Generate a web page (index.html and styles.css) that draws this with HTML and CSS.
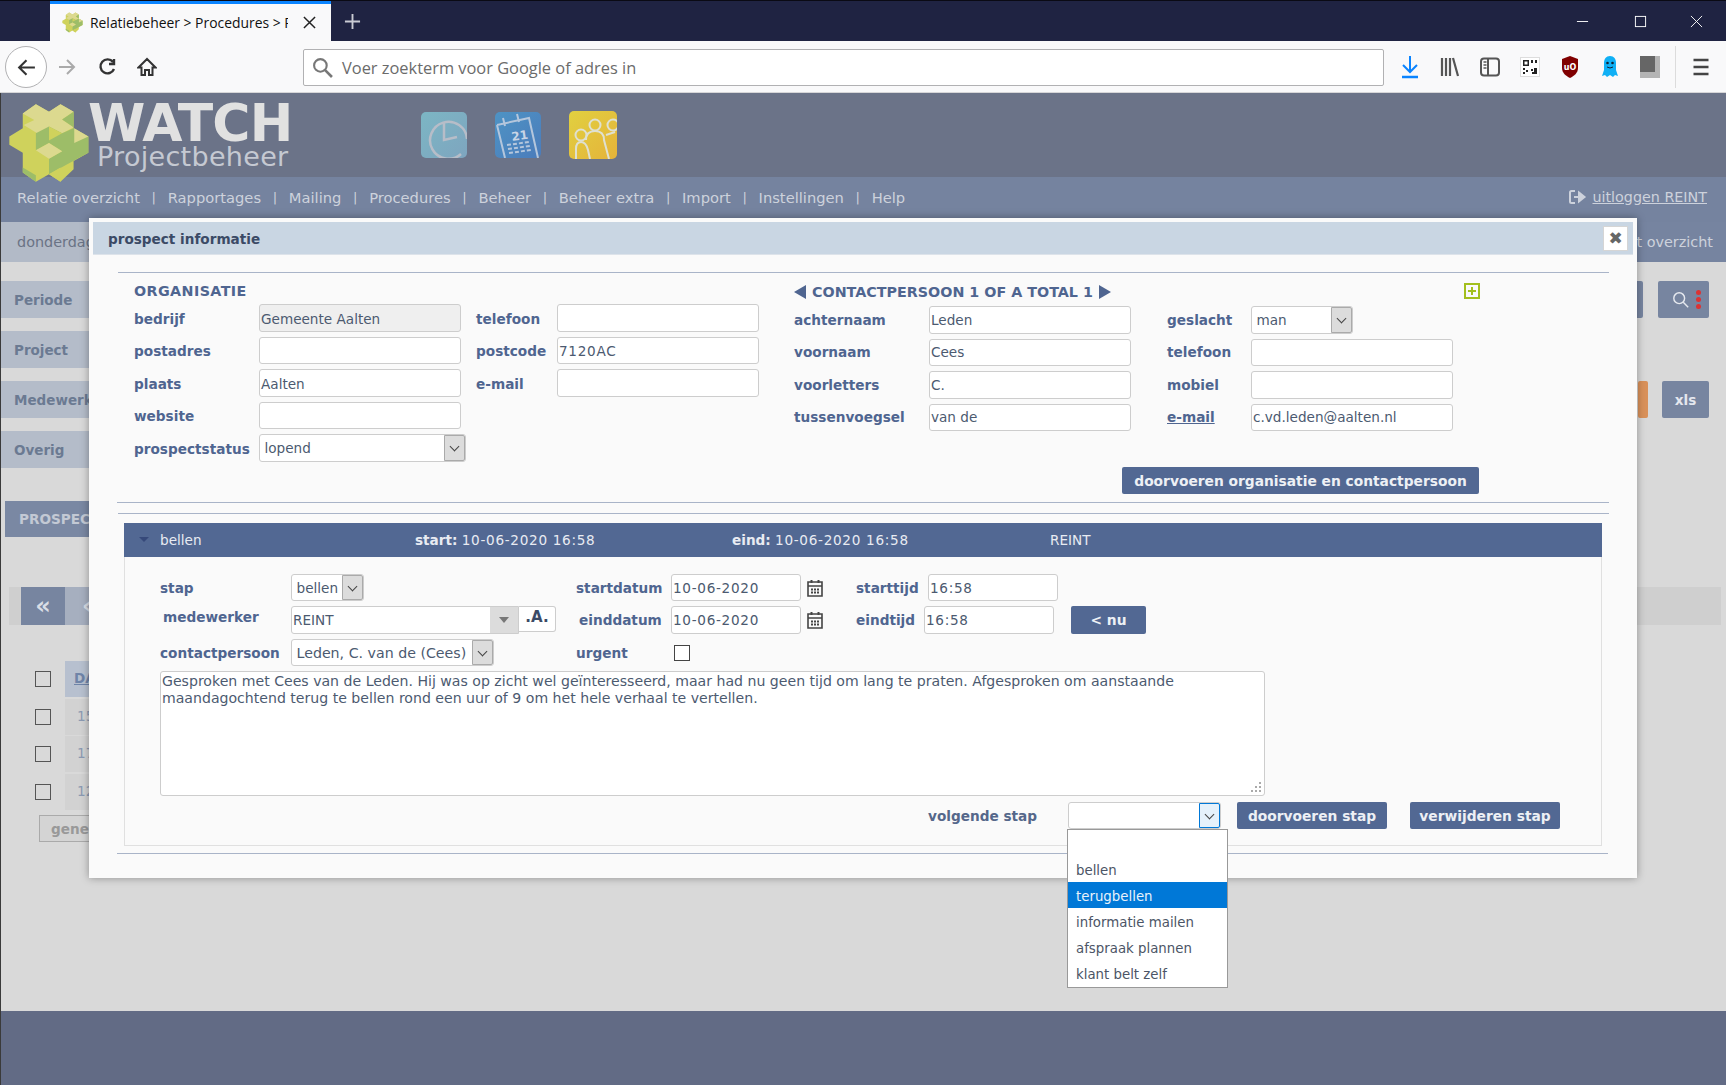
FILE: index.html
```html
<!DOCTYPE html>
<html lang="nl">
<head>
<meta charset="utf-8">
<title>Relatiebeheer &gt; Procedures</title>
<link rel="stylesheet" href="styles.css">
</head>
<body>
<div class="browser">
  <div class="titlebar">
    <div class="tab">
      <svg class="favicon" viewBox="20 35 250 250"><use href="#logo"/></svg>
      <span class="tab-title">Relatiebeheer &gt; Procedures &gt; P</span>
      <svg class="tab-close" viewBox="0 0 14 14"><path d="M1 1l12 12M13 1L1 13" stroke="#222" stroke-width="1.6" fill="none"/></svg>
    </div>
    <svg class="newtab" viewBox="0 0 18 18"><path d="M9 1v16M1 9h16" stroke="#c9cbd3" stroke-width="2" fill="none"/></svg>
    <div class="winctl">
      <svg class="wmin" viewBox="0 0 14 14"><path d="M1 7h12" stroke="#fff" fill="none"/></svg>
      <svg viewBox="0 0 14 14"><rect x="1.5" y="1.5" width="11" height="11" stroke="#fff" fill="none"/></svg>
      <svg viewBox="0 0 14 14"><path d="M1 1l12 12M13 1L1 13" stroke="#fff" fill="none"/></svg>
    </div>
  </div>
  <div class="toolbar">
    <div class="backbtn"><svg viewBox="0 0 20 20"><path d="M18 10H3M10 3l-7 7 7 7" stroke="#333" stroke-width="2" fill="none"/></svg></div>
    <svg class="tbicon fwd" viewBox="0 0 20 20"><path d="M2 10h15M10 3l7 7-7 7" stroke="#aaa" stroke-width="2" fill="none"/></svg>
    <svg class="tbicon reload" viewBox="0 0 20 20"><path d="M16 12a7 7 0 1 1-1-7M16 2v5h-5" stroke="#333" stroke-width="2.400" fill="none"/></svg>
    <svg class="tbicon home" viewBox="0 0 20 20"><path d="M10 2L1.500 10.500H4.500V18H8V13h4v5h3.500V10.500H18.500z" stroke="#333" stroke-width="2" fill="none"/></svg>
    <div class="urlbar">
      <svg viewBox="0 0 20 20"><circle cx="8" cy="8" r="6" stroke="#777" stroke-width="2" fill="none"/><path d="M12.500 12.500L19 19" stroke="#777" stroke-width="2.500"/></svg>
      <span>Voer zoekterm voor Google of adres in</span>
    </div>
    <div class="tbright">
      <svg viewBox="0 0 20 24"><path d="M10 1v15M3 10l7 7 7-7" stroke="#0a84ff" stroke-width="2" fill="none"/><path d="M2 22h16" stroke="#0a84ff" stroke-width="2.500"/></svg>
      <svg viewBox="0 0 20 24"><path d="M2 3v18M6 3v18M10 3v18M13 3l5 18" stroke="#555" stroke-width="2.200" fill="none"/></svg>
      <svg viewBox="0 0 20 24"><rect x="1" y="3.500" width="18" height="17" rx="3" stroke="#555" stroke-width="2" fill="none"/><path d="M8 4v16" stroke="#555" stroke-width="2"/><path d="M3.500 7h3M3.500 10h3M3.500 13h3" stroke="#555" stroke-width="1.500"/></svg>
      <svg viewBox="0 0 20 24"><rect x="0.500" y="2.500" width="19" height="19" fill="#fff" stroke="#ddd"/><path fill-rule="evenodd" d="M3 5h6v6H3zM4.500 6.500v3h3v-3zM11 5h2v3h-2zM15 5h2v3h-2zM3 13h2v2H3zM6 15h2v2H6zM3 17h2v2H3zM11 14h2v2h-2zM14 13h3v6h-5v-2h2z" fill="#222"/></svg>
      <svg viewBox="0 0 20 24"><path d="M10 1l8 3v9c0 5-4 8-8 10-4-2-8-5-8-10V4z" fill="#800000"/><text x="10" y="15" class="ublock">uO</text></svg>
      <svg viewBox="0 0 20 24"><path d="M10 1c-4 0-6 3-6 7v7l-2 6 3-1 2 2 3-2 3 2 2-2 3 1-2-6V8c0-4-2-7-6-7z" fill="#10b0f5"/><circle cx="7.500" cy="8" r="1.300" fill="#123"/><circle cx="12.500" cy="8" r="1.300" fill="#123"/><path d="M7 12q3 2 6 0" stroke="#123" fill="none"/></svg>
      <svg viewBox="0 0 20 24"><rect y="1" width="20" height="22" fill="#b4b4b4"/><rect y="1" width="15" height="16" fill="#666"/></svg>
      <i class="tbsep"></i>
      <svg viewBox="0 0 20 24"><path d="M2.500 5h15M2.500 12h15M2.500 19h15" stroke="#444" stroke-width="2.400"/></svg>
    </div>
  </div>

  <div class="page">
    <header class="header">
      <svg class="logo" viewBox="20 38 250 244">
        <g id="logo">
          <polygon fill="#cfd25c" points="105,42 145,65 180,42 220,65 220,115 265,140 265,190 220,215 220,240 180,278 145,255 105,278 65,250 65,190 24,165 24,140 65,115 65,70"/>
          <polygon fill="#dcd98f" points="65,70 105,42 145,65 180,42 220,65 185,88 220,112 145,152 68,105 100,90"/>
          <polygon fill="#9dbd68" points="185,88 220,65 220,112"/>
          <polygon fill="#9dbd68" points="105,130 145,110 185,130 220,115 265,140 265,190 145,255 145,208 185,185 145,160 105,182"/>
          <polygon fill="#dcd98f" points="222,115 265,140 222,160"/>
          <polygon fill="#dcd98f" points="105,182 145,160 185,185 145,208"/>
          <polygon fill="#cfd25c" points="145,110 185,130 145,152"/>
          <polygon fill="#9dbd68" points="65,235 105,258 105,278 65,250"/>
          <polygon fill="#cfd25c" points="145,255 180,235 180,278"/>
        </g>
      </svg>
      <div class="brand">
        <div class="brand-name">WATCH</div>
        <div class="brand-sub">Projectbeheer</div>
      </div>
      <div class="apps">
        <svg class="app" viewBox="0 0 46 46"><defs><linearGradient id="gc" x1="0" y1="0" x2="1" y2="1"><stop offset="0" stop-color="#7cb6c4"/><stop offset="1" stop-color="#7ea5bf"/></linearGradient></defs><rect width="46" height="46" rx="5" fill="url(#gc)"/><path d="M46 27a18.500 18.500 0 1 0-6 15M23 11v17l13-3" stroke="#b7bdc8" stroke-width="2.500" fill="none"/></svg>
        <svg class="app" viewBox="0 0 46 46"><defs><linearGradient id="gk" x1="0" y1="0" x2="1" y2="1"><stop offset="0" stop-color="#4e93c4"/><stop offset="1" stop-color="#4b7cbb"/></linearGradient></defs><rect width="46" height="46" rx="5" fill="url(#gk)"/><path d="M2 13l32-7 9 40M2 13l8 33" stroke="#b4c6dc" stroke-width="2" fill="none"/><path d="M8 6l2 8M22 2l2 8" stroke="#b4c6dc" stroke-width="2"/><text x="17" y="29" class="cal21" transform="rotate(-8 17 29)">21</text><path d="M12 33l22-3M13 37l22-3M14 41l22-3" stroke="#b4c6dc" stroke-width="2" stroke-dasharray="4 2"/></svg>
        <svg class="app people" viewBox="0 0 48 48"><defs><linearGradient id="gp" x1="0" y1="0" x2="1" y2="1"><stop offset="0" stop-color="#e1d040"/><stop offset="1" stop-color="#e5b33a"/></linearGradient></defs><rect width="48" height="48" rx="5" fill="url(#gp)"/><circle cx="12" cy="24" r="5.500" stroke="#dfe0d0" stroke-width="2" fill="none"/><circle cx="26" cy="14" r="5.500" stroke="#dfe0d0" stroke-width="2" fill="none"/><circle cx="44" cy="14" r="5.500" stroke="#dfe0d0" stroke-width="2" fill="none"/><path d="M7 48V38q0-7 5-7t7 8l2 9M17 29q0-9 9-9t9 9l5 19M37 24l9-3" stroke="#dfe0d0" stroke-width="2" fill="none"/></svg>
      </div>
    </header>
    <nav class="nav">
      <a>Relatie overzicht</a><i>|</i><a>Rapportages</a><i>|</i><a>Mailing</a><i>|</i><a>Procedures</a><i>|</i><a>Beheer</a><i>|</i><a>Beheer extra</a><i>|</i><a>Import</a><i>|</i><a>Instellingen</a><i>|</i><a>Help</a>
      <a class="logout"><svg viewBox="0 0 18 14"><path d="M6 1H2.500Q1 1 1 2.500v9Q1 13 2.500 13H6" stroke="#cdd2dc" stroke-width="2" fill="none"/><path d="M5 7h8M10 2.500L15.500 7 10 11.500z" stroke="#cdd2dc" stroke-width="2" fill="#cdd2dc"/></svg><u>uitloggen REINT</u></a>
    </nav>
    <div class="subbar"><span>donderdag</span><span>project overzicht</span></div>

    <main class="content">
      <div class="frow"><div class="flabel">Periode</div><div class="fright"><div class="fbtn wide"></div><div class="fbtn search"><svg viewBox="0 0 20 20"><circle cx="8" cy="8" r="6" stroke="#e6e9ef" stroke-width="1.600" fill="none"/><path d="M12.500 12.500L18 18" stroke="#e6e9ef" stroke-width="1.600"/></svg><b class="dots"></b></div></div></div>
      <div class="frow"><div class="flabel">Project</div></div>
      <div class="frow"><div class="flabel">Medewerker</div><div class="fright tight"><div class="fbtn orange"></div><div class="fbtn xls">xls</div></div></div>
      <div class="frow"><div class="flabel">Overig</div></div>
      <div class="ptab">PROSPECT</div>
      <div class="pager"><div class="pbtn">«</div><div class="pbtn light">‹</div></div>
      <div class="tbl">
        <div class="cb"></div><div class="th">DATUM</div>
        <div class="cb"></div><div class="td">15-06</div>
        <div class="cb"></div><div class="td">17-06</div>
        <div class="cb"></div><div class="td">12-06</div>
      </div>
      <div class="gen">genereren</div>
    </main>
    <div class="pagefoot"></div>

    <section class="modal">
      <div class="mtitle">
        <span>prospect informatie</span>
        <div class="mclose">✖</div>
      </div>
      <div class="rule first"></div>
      <div class="info">
        <div class="org">
          <h3 class="head wide">ORGANISATIE</h3>
          <div class="orggrid">
            <label>bedrijf</label><div class="field ro">Gemeente Aalten</div><label>telefoon</label><div class="field"></div>
            <label>postadres</label><div class="field"></div><label>postcode</label><div class="field num">7120AC</div>
            <label>plaats</label><div class="field">Aalten</div><label>e-mail</label><div class="field"></div>
            <label>website</label><div class="field"></div><span></span><span></span>
            <label>prospectstatus</label><div class="select over4"><span>lopend</span><b class="sbtn"></b></div>
          </div>
        </div>
        <div class="contact">
          <div class="chead">
            <h3 class="head"><i class="tri l"></i>CONTACTPERSOON 1 OF A TOTAL 1<i class="tri r"></i></h3>
            <svg class="plus" viewBox="0 0 16 16"><rect x="1" y="1" width="14" height="14" stroke="#a3bf1e" stroke-width="2" fill="none"/><path d="M8 4v8M4 8h8" stroke="#a3bf1e" stroke-width="2"/></svg>
          </div>
          <div class="congrid">
            <label>achternaam</label><div class="field">Leden</div><label>geslacht</label><div class="select short"><span>man</span><b class="sbtn"></b></div>
            <label>voornaam</label><div class="field">Cees</div><label>telefoon</label><div class="field"></div>
            <label>voorletters</label><div class="field">C.</div><label>mobiel</label><div class="field"></div>
            <label>tussenvoegsel</label><div class="field">van de</div><label><u>e-mail</u></label><div class="field">c.vd.leden@aalten.nl</div>
          </div>
          <div class="btn big">doorvoeren organisatie en contactpersoon</div>
        </div>
      </div>
      <div class="rule second"></div>
      <div class="rule third"></div>

      <div class="step">
        <div class="stepbar">
          <div class="sb-name"><i class="caret"></i>bellen</div>
          <div><b>start:</b> <span class="num">10-06-2020 16:58</span></div>
          <div><b>eind:</b> <span class="num">10-06-2020 16:58</span></div>
          <div>REINT</div>
        </div>
        <div class="stepbody">
          <div class="stepgrid">
            <label>stap</label><div class="ctl"><div class="select w73"><span>bellen</span><b class="sbtn"></b></div></div>
            <label>startdatum</label><div class="field num">10-06-2020</div>
            <svg class="cal" viewBox="0 0 16 18"><path d="M1 3h14v14H1zM1 7h14" stroke="#444" stroke-width="1.600" fill="none"/><path d="M4.500 1v3M11.500 1v3" stroke="#444" stroke-width="2"/><path d="M4 9.500h2v2H4zM7 9.500h2v2H7zM10 9.500h2v2h-2zM4 12.500h2v2H4zM7 12.500h2v2H7zM10 12.500h2v2h-2z" fill="#444"/></svg>
            <label>starttijd</label><div class="field num">16:58</div><span></span><span></span>

            <label class="shifted">medewerker</label>
            <div class="ctl combo"><div class="combo-in"><span>REINT</span><b class="cbtn"></b></div><div class="abtn">.A.</div></div>
            <label class="nudge">einddatum</label><div class="field num">10-06-2020</div>
            <svg class="cal" viewBox="0 0 16 18"><path d="M1 3h14v14H1zM1 7h14" stroke="#444" stroke-width="1.600" fill="none"/><path d="M4.500 1v3M11.500 1v3" stroke="#444" stroke-width="2"/><path d="M4 9.500h2v2H4zM7 9.500h2v2H7zM10 9.500h2v2h-2zM4 12.500h2v2H4zM7 12.500h2v2H7zM10 12.500h2v2h-2z" fill="#444"/></svg>
            <label>eindtijd</label><div class="field num shiftl">16:58</div><span></span><div class="btn nu">&lt; nu</div>

            <label>contactpersoon</label><div class="ctl"><div class="select w203"><span>Leden, C. van de (Cees)</span><b class="sbtn"></b></div></div>
            <label>urgent</label><div class="chkwrap"><div class="chk"></div></div>
          </div>
          <div class="note">Gesproken met Cees van de Leden. Hij was op zicht wel geïnteresseerd, maar had nu geen tijd om lang te praten. Afgesproken om aanstaande maandagochtend terug te bellen rond een uur of 9 om het hele verhaal te vertellen.
            <svg class="grip" viewBox="0 0 10 10"><path d="M8 0h2v2H8zM4 4h2v2H4zM8 4h2v2H8zM0 8h2v2H0zM4 8h2v2H4zM8 8h2v2H8z" fill="#aaa"/></svg>
          </div>
          <div class="nextrow">
            <label>volgende stap</label>
            <div class="select next">
              <span></span><b class="sbtn focus"></b>
              <ul class="menu">
                <li></li><li>bellen</li><li class="on">terugbellen</li><li>informatie mailen</li><li>afspraak plannen</li><li>klant belt zelf</li>
              </ul>
            </div>
            <div class="btn act">doorvoeren stap</div>
            <div class="btn act">verwijderen stap</div>
          </div>
        </div>
      </div>
      <div class="rule fourth"></div>
    </section>
  </div>
</div>
</body>
</html>
```
FILE: styles.css
```css
* { box-sizing: border-box; }
html, body { margin: 0; height: 100%; overflow: hidden; }
body { font-family: "DejaVu Sans", sans-serif; font-size: 13.6px; color: #4c5a70; }
.browser { width: 1726px; height: 1085px; display: flex; flex-direction: column; }

/* browser chrome */
.titlebar { height: 41px; flex: none; background: #1f2342; border-top: 1px solid #0a0a14; display: flex; align-items: stretch; padding-left: 50px; position: relative; }
.tab { width: 281px; background: #f9f9fa; border-top: 3px solid #0a84ff; display: flex; align-items: center; padding: 0 0 1px 12px; position: relative; font-family: "Open Sans", sans-serif; font-size: 13.9px; color: #111; overflow: hidden; }
.favicon { width: 21px; height: 21px; flex: none; margin-right: 7px; }
.tab-title { white-space: nowrap; width: 198px; overflow: hidden; }
.tab-close { width: 13px; height: 13px; margin-left: 15px; flex: none; }
.newtab { width: 17px; height: 17px; align-self: center; margin-left: 13px; }
.winctl { margin-left: auto; display: flex; align-items: center; gap: 43px; padding-right: 23px; }
.winctl svg { width: 13px; height: 13px; }
.winctl .wmin { margin-right: 2px; }
.toolbar { height: 52px; flex: none; background: #f9f9fa; border-bottom: 1px solid #d6d6d8; display: flex; align-items: center; padding: 1px 0 0 5px; }
.backbtn { width: 42px; height: 42px; border-radius: 50%; border: 1px solid #b1b1b3; background: #fff; display: flex; align-items: center; justify-content: center; }
.backbtn svg { width: 21px; height: 21px; }
.tbicon { width: 20px; height: 20px; flex: none; }
.fwd { margin-left: 10px; }
.reload { margin-left: 21px; }
.home { margin-left: 19px; }
.urlbar { margin-left: 146px; width: 1081px; height: 37px; background: #fff; border: 1px solid #b1b1b3; border-radius: 2px; display: flex; align-items: center; padding-left: 8px; font-family: "Open Sans", sans-serif; font-size: 16.4px; color: #6b6b6b; }
.urlbar svg { width: 21px; height: 21px; margin-right: 9px; flex: none; }
.urlbar span { padding-top: 1px; }
.tbright { display: flex; align-items: center; margin-left: 16px; gap: 20px; }
.tbright svg { width: 20px; height: 24px; flex: none; }
.tbsep { width: 1px; height: 42px; background: #dcdcdc; margin: 0 -5px; }
.ublock { font: bold 8px "DejaVu Sans", sans-serif; fill: #fff; text-anchor: middle; }

/* page behind the dialog */
.page { position: relative; flex: 1; display: flex; flex-direction: column; background: #d9d9d9; border-left: 1px solid #3a3a3a; }
.header { height: 84px; flex: none; background: #6b7388; display: flex; align-items: flex-start; padding: 10px 0 0 7px; position: relative; z-index: 1; }
.logo { width: 82px; height: 80px; flex: none; overflow: visible; }
.brand { margin: 0 0 0 -2px; width: 304px; flex: none; }
.brand-name { font-weight: bold; font-size: 52px; line-height: 40px; color: #e1e1e1; letter-spacing: -0.8px; }
.brand-sub { font-size: 27px; line-height: 28px; color: #c5c9d2; margin-left: 9px; letter-spacing: 0.3px; }
.apps { display: flex; align-items: flex-start; gap: 28px; margin-left: 29px; padding-top: 9px; }
.app { width: 46px; height: 46px; flex: none; }
.people { width: 48px; height: 48px; margin-top: -1px; }
.cal21 { font: bold 12px "DejaVu Sans", sans-serif; fill: #c8d5e6; }
.nav { height: 45px; flex: none; background: #75839f; display: flex; align-items: center; padding: 0 19px 5px 16px; color: #cdd2dc; font-size: 14.7px; white-space: nowrap; }
.nav i { width: 27.800px; text-align: center; font-style: normal; font-size: 13px; }
.logout { margin-left: auto; display: flex; align-items: center; font-size: 14.300px; }
.logout svg { width: 18px; height: 14px; margin-right: 5px; }
.subbar { height: 40px; flex: none; background: linear-gradient(90deg, #b2bac7 0, #b2bac7 6%, #7684a0 94%); display: flex; justify-content: space-between; align-items: center; padding: 0 13px 0 16px; color: #6a7385; font-size: 14.4px; }
.subbar span:last-child { color: #cdd2dc; }
.content { height: 749px; flex: none; padding: 19px 0 0 0; color: #6b7a92; }
.pagefoot { flex: 1; background: #626b85; }
.frow { height: 37px; margin-bottom: 13px; display: flex; justify-content: space-between; padding-right: 17px; }
.flabel { width: 88px; background: #b4bcc9; display: flex; align-items: center; padding-left: 13px; font-weight: bold; font-size: 13.5px; white-space: nowrap; }
.fright { display: flex; gap: 15px; }
.fright.tight { gap: 14px; }
.fbtn { background: #7785a0; height: 37px; border-radius: 2px; }
.fbtn.wide { width: 40px; }
.fbtn.search { width: 51px; display: flex; align-items: center; padding-left: 14px; position: relative; }
.fbtn.search svg { width: 18px; height: 18px; }
.dots { position: absolute; left: 38px; top: 9px; width: 5px; height: 5px; background: #d33; border-radius: 50%; box-shadow: 0 7px 0 #d33, 0 14px 0 #d33; }
.fbtn.orange { width: 10px; background: #d9915a; }
.fbtn.xls { width: 47px; color: #e4e7ee; font-weight: bold; display: flex; align-items: center; justify-content: center; }
.ptab { margin: 33px 0 0 4px; width: 84px; height: 36px; background: #7a88a3; color: #c3c9d4; font-weight: bold; display: flex; align-items: center; padding-left: 14px; white-space: nowrap; }
.pager { margin: 50px 0 0 8px; width: 1712px; height: 38px; background: #cfcfcf; display: flex; padding-left: 12px; }
.pbtn { width: 44px; background: #7785a0; color: #d9dde5; display: flex; align-items: center; justify-content: center; font-size: 24px; font-weight: bold; }
.pbtn.light { background: #a6afbf; }
.tbl { margin: 36px 0 0 34px; width: 54px; display: grid; grid-template-columns: 30px 24px; grid-auto-rows: 36px; row-gap: 1.5px; align-items: stretch; }
.cb { width: 16px; height: 16px; border: 1px solid #555; align-self: center; }
.th { background: #b7c0cf; color: #6f84a8; font-weight: bold; padding: 9px 0 0 9px; white-space: nowrap; text-decoration: underline; }
.td { background: #d2d2d2; color: #8c9ab2; padding: 9px 0 0 12px; white-space: nowrap; }
.gen { margin: 5px 0 0 38px; width: 50px; height: 27px; border: 1px solid #aaa; background: #d4d4d4; color: #999; font-weight: bold; padding: 5px 0 0 11px; white-space: nowrap; border-right: 0; }

/* dialog */
.modal { position: absolute; left: 88px; top: 125px; width: 1548px; height: 660px; background: #fafafa; padding: 4px 4px 0; box-shadow: 0 0 8px rgba(0,0,0,.35); z-index: 5; }
.mtitle { height: 33px; background: #c9d6e3; border-bottom: 1px solid #dde3ea; display: flex; align-items: center; justify-content: space-between; padding: 0 5px 0 15px; font-weight: bold; font-size: 13.6px; color: #3b4a66; }
.mtitle > span { padding-top: 2px; }
.mclose { width: 25px; height: 25px; background: #fff; border: 1px solid #d5d5d5; display: flex; align-items: center; justify-content: center; color: #666; font-size: 17px; font-weight: bold; }
.rule { height: 1px; background: #a9b4c8; width: 1491px; margin-left: 25px; }
.rule.first { margin-top: 17px; }
.rule.second { margin-top: 8px; margin-left: 24px; width: 1492px; }
.rule.third { margin-top: 10px; }
.rule.fourth { margin-top: 7px; margin-left: 24px; }
.info { display: flex; padding: 8px 0 0 41px; }
.org { width: 660px; flex: none; }
.contact { width: 686px; flex: none; display: flex; flex-direction: column; }
.head { margin: 0; font-size: 14.300px; font-weight: bold; color: #4f6590; height: 23px; display: flex; align-items: center; white-space: nowrap; padding-bottom: 4px; }
.head.wide { letter-spacing: 0.400px; }
.chead { display: flex; justify-content: space-between; align-items: center; height: 25px; }
.plus { width: 16px; height: 16px; margin-bottom: 6px; }
.tri { width: 0; height: 0; border-top: 7px solid transparent; border-bottom: 7px solid transparent; display: inline-block; }
.tri.l { border-right: 12px solid #4f6590; margin-right: 6px; }
.tri.r { border-left: 12px solid #4f6590; margin-left: 6px; }
label { font-weight: bold; font-size: 13.650px; color: #4f6590; display: flex; align-items: center; white-space: nowrap; }
.orggrid { display: grid; grid-template-columns: 125px 217px 81px 202px; grid-auto-rows: 27.500px; row-gap: 5px; }
.orggrid > label, .orggrid > .field, .orggrid > .select { padding-top: 2px; }
.orggrid > .field:nth-child(4n+2) { width: 202px; }
.orggrid > .over4 { width: 207px; padding-top: 0; }
.congrid { display: grid; grid-template-columns: 135px 238px 84px 202px; grid-auto-rows: 27.500px; row-gap: 5px; }
.congrid > .field:nth-child(4n+2) { width: 202px; }
.field { background: #fff; border: 1px solid #cdcdcd; border-radius: 3px; padding-left: 1px; display: flex; align-items: center; white-space: nowrap; height: 100%; }
.field.ro { background: #efefef; }
.field.shiftl { margin: 0 4px 0 -4px; }
.num { letter-spacing: 0.700px; }
.select { background: #fff; border: 1px solid #cdcdcd; border-radius: 3px; display: flex; align-items: center; justify-content: space-between; padding-left: 4.500px; white-space: nowrap; height: 100%; position: relative; }
.select.short { width: 102px; }
.select.w73 { width: 73px; height: 27px; }
.select.w203 { width: 203px; height: 27px; font-size: 14.200px; }
.sbtn { width: 21px; height: 100%; flex: none; background: #dcdcdc; border: 1px solid #aaa; border-radius: 0 2px 2px 0; display: flex; align-items: center; justify-content: center; padding-bottom: 3px; }
.sbtn::after { content: ""; width: 6px; height: 6px; border-right: 1px solid #444; border-bottom: 1px solid #444; transform: rotate(45deg); }
.sbtn.focus { background: #e5f1fb; border-color: #0078d7; }
.btn { background: #526893; color: #edf0f5; font-weight: bold; font-size: 13.800px; border-radius: 2px; display: flex; align-items: center; justify-content: center; white-space: nowrap; }
.btn.big { margin-top: 36px; height: 27px; width: 357px; align-self: flex-end; margin-right: 1px; }
.step { margin: 9px 0 0 31px; width: 1478px; height: 323px; border: 1px solid #e0e0e0; border-top: 0; }
.stepbar { height: 34px; margin: 0 -1px; background: #526893; color: #e8ebf2; display: grid; grid-template-columns: 291px 317px 318px 1fr; align-items: center; }
.sb-name { padding-left: 36px; position: relative; }
.caret { position: absolute; left: 15px; top: 5px; width: 0; height: 0; border: 5px solid transparent; border-top: 5px solid #36497a; }
.stepbody { padding: 17px 0 0 35px; }
.stepgrid { display: grid; grid-template-columns: 131px 285px 95px 130px 55px 72px 130px 13px 75px; grid-template-rows: 27px 28px 27px; row-gap: 5px; }
.ctl { display: flex; align-items: stretch; }
.cal { width: 16px; height: 18px; margin: 5px 0 0 6px; }
label.shifted { padding: 0 0 6px 3px; }
label.nudge { padding-left: 3px; }
.combo-in { width: 228px; height: 27.500px; background: #fff; border: 1px solid #cdcdcd; border-radius: 3px 0 0 3px; display: flex; align-items: center; justify-content: space-between; padding-left: 1px; }
.cbtn { width: 28px; height: 100%; background: #dcdcdc; display: flex; align-items: center; justify-content: center; }
.cbtn::after { content: ""; border: 5px solid transparent; border-top: 6px solid #777; margin-top: 6px; }
.abtn { width: 37px; height: 26px; background: #fff; border: 1px solid #cdcdcd; border-left: 0; border-radius: 0 3px 3px 0; font-weight: bold; font-size: 15px; color: #3b4a66; display: flex; align-items: center; justify-content: center; padding-bottom: 4px; }
.chkwrap { display: flex; align-items: center; padding: 0 0 0 3px; }
.chk { width: 16px; height: 16px; border: 1px solid #444; background: #fff; }
.btn.nu { height: 28px; }
.note { margin-top: 5px; width: 1105px; height: 125px; background: #fff; border: 1px solid #cdcdcd; border-radius: 3px; padding: 1px 1px; line-height: 17px; position: relative; font-size: 14.100px; }
.grip { position: absolute; right: 3px; bottom: 3px; width: 10px; height: 10px; }
.nextrow { margin: 6px 0 0 768px; display: flex; align-items: stretch; height: 27px; }
.nextrow label { width: 140px; color: #55678a; }
.select.next { width: 153px; flex: none; padding: 0; }
.btn.act { width: 150px; margin-left: 16px; }
.btn.act:last-child { margin-left: 23px; }
.menu { position: absolute; left: -2px; top: 26px; width: 161px; height: 159px; margin: 0; padding: 0; list-style: none; background: #fff; border: 1px solid #999; z-index: 9; }
.menu li { height: 26px; padding: 2px 0 0 8px; display: flex; align-items: center; color: #4c5566; font-size: 13.330px; }
.menu li.on { background: #0078d7; color: #e8f2fb; }
```
